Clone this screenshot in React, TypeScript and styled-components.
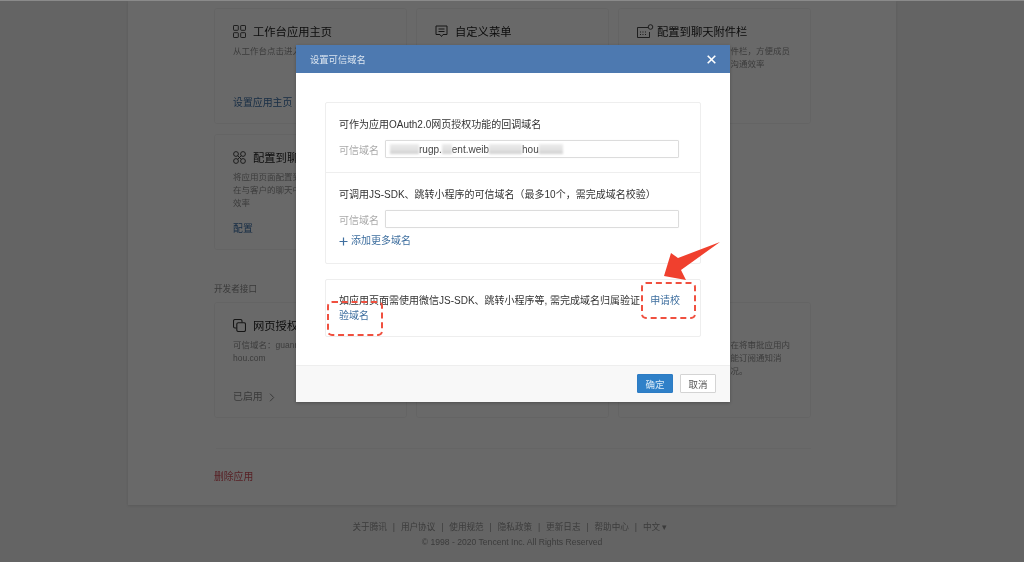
import React from "react";
import styled, { createGlobalStyle } from "styled-components";

const Global = createGlobalStyle`
  html, body { margin: 0; padding: 0; height: 562px; overflow: hidden; background: #efefef; }
  * { box-sizing: border-box; }
  body { font-family: "Liberation Sans", "Noto Sans CJK SC", sans-serif; }
`;

const Page = styled.div`
  position: relative;
  width: 1024px;
  height: 562px;
  overflow: hidden;
  display: flex;
  flex-direction: column;
  align-items: center;
  background: #efefef;
  border-top: 1px solid #8a8a8a;
  filter: blur(0.45px);
`;
const Panel = styled.main`
  width: 768px;
  height: 504px;
  flex: none;
  padding: 7px 85px 0 86px;
  background: #fbfbfb;
  box-shadow: 0 1px 3px rgba(0, 0, 0, 0.12);
`;
const CardGrid = styled.section`
  display: grid;
  grid-template-columns: repeat(3, 193px);
  grid-auto-rows: 116px;
  column-gap: 9px;
  row-gap: 10px;
`;
const Card = styled.article`
  display: flex;
  flex-direction: column;
  padding: 14px 10px 13px 18px;
  border: 1px solid #efefef;
  border-radius: 3px;
`;
const CardHead = styled.header<{ $tight?: boolean }>`
  display: flex;
  align-items: center;
  gap: ${(p) => (p.$tight ? "3px" : "7px")};
  height: 16px;
  font-size: 11.3px;
  color: #222;
  white-space: nowrap;
  svg { flex: none; color: #333; }
`;
const CardDesc = styled.p`
  margin: 6px 0 0;
  font-size: 8.5px;
  line-height: 13px;
  color: #8f8f8f;
  white-space: nowrap;
`;
const CardLink = styled.a<{ $muted?: boolean }>`
  display: flex;
  align-items: center;
  gap: 6px;
  margin-top: auto;
  font-size: 9.9px;
  line-height: 14px;
  color: ${(p) => (p.$muted ? "#888" : "#3a6ea5")};
`;
const SectionLabel = styled.h2`
  margin: 32px 0 6px;
  font-size: 8.6px;
  line-height: 14px;
  font-weight: 400;
  color: #888;
`;
const Divider = styled.hr`
  margin: 30px 0 21px 2px;
  border: 0;
  border-top: 1px solid #f0f0f0;
`;
const DangerLink = styled.a`
  display: block;
  font-size: 9.8px;
  line-height: 14px;
  color: #d0505a;
`;
const Footer = styled.footer`
  display: flex;
  flex-direction: column;
  align-items: center;
  gap: 3px;
  margin-top: 16px;
  font-size: 8.6px;
  line-height: 12px;
  color: #8e8e8e;
`;
const FooterLinks = styled.nav`
  display: flex;
  gap: 5.9px;
  margin-right: 4px;
  white-space: nowrap;
`;

const Overlay = styled.div`
  position: absolute;
  inset: 0;
  display: flex;
  justify-content: center;
  align-items: flex-start;
  padding: 44px 0 0 2px;
  background: rgba(0, 0, 0, 0.58);
`;
const Modal = styled.div`
  width: 434px;
  height: 357px;
  display: flex;
  flex-direction: column;
  background: #fff;
  box-shadow: 0 1px 3px rgba(0, 0, 0, 0.25);
`;
const ModalHead = styled.header`
  flex: none;
  height: 28px;
  display: flex;
  align-items: center;
  justify-content: space-between;
  padding: 0 14px;
  background: #4d79b0;
  color: #dbe5f0;
  font-size: 9.3px;
  svg { color: #fff; }
`;
const ModalBody = styled.div`
  flex: 1;
  display: flex;
  flex-direction: column;
  gap: 15px;
  padding: 29px 29px 0;
`;
const Section = styled.section`
  position: relative;
  border: 1px solid #eeeeee;
  border-radius: 2px;
`;
const Block = styled.div<{ $last?: boolean }>`
  height: ${(p) => (p.$last ? "90px" : "70px")};
  padding: 15px 21px 0 13px;
  border-bottom: ${(p) => (p.$last ? "0" : "1px solid #eeeeee")};
`;
const BlockTitle = styled.h3`
  margin: 0;
  font-size: 10px;
  line-height: 14px;
  font-weight: 400;
  color: #333;
  white-space: nowrap;
`;
const Field = styled.div`
  display: flex;
  align-items: center;
  gap: 6px;
  margin-top: 8px;
`;
const FieldLabel = styled.label`
  flex: none;
  width: 40px;
  font-size: 10px;
  color: #aaa;
`;
const FakeInput = styled.div`
  flex: 1;
  height: 18px;
  display: flex;
  align-items: center;
  padding-left: 4px;
  border: 1px solid #dcdcdc;
  border-radius: 1px;
  box-shadow: 0 0 1px rgba(0, 0, 0, 0.08);
  font-size: 10px;
  color: #444;
  white-space: nowrap;
`;
const Redacted = styled.span<{ $w: number }>`
  display: inline-block;
  flex: none;
  width: ${(p) => p.$w}px;
  height: 10px;
  background: linear-gradient(180deg, #ececec 0%, #e2e2e2 55%, #cfcfcf 100%);
  filter: blur(0.8px);
`;
const AddMore = styled.a`
  display: flex;
  align-items: center;
  gap: 3px;
  margin-top: 6px;
  font-size: 10px;
  line-height: 14px;
  color: #3f6f9f;
`;
const Notice = styled.p`
  margin: 0;
  padding: 13px;
  font-size: 10px;
  line-height: 15px;
  color: #333;
`;
const NoticeLink = styled.a`
  margin-left: 10px;
  color: #3f6f9f;
`;
const DashedBox = styled.span<{ $left: number; $top: number; $w: number; $h: number }>`
  position: absolute;
  left: ${(p) => p.$left}px;
  top: ${(p) => p.$top}px;
  width: ${(p) => p.$w}px;
  height: ${(p) => p.$h}px;
  border: 2px dashed #f0503f;
  border-radius: 5px;
`;
const Arrow = styled.svg`
  position: absolute;
  left: 0;
  top: 0;
  pointer-events: none;
`;
const ModalFoot = styled.footer`
  flex: none;
  height: 37px;
  display: flex;
  align-items: center;
  justify-content: flex-end;
  gap: 7px;
  padding: 0 14px 1px 0;
  background: #f8f8f8;
  border-top: 1px solid #eeeeee;
`;
const Button = styled.button<{ $primary?: boolean }>`
  width: 36px;
  height: 19px;
  padding: 0;
  border: 1px solid ${(p) => (p.$primary ? "#2d7cc4" : "#d4d4d4")};
  border-radius: 1px;
  background: ${(p) => (p.$primary ? "#2f80c8" : "#fff")};
  color: ${(p) => (p.$primary ? "#dcebf7" : "#555")};
  font: 9.5px "Liberation Sans", "Noto Sans CJK SC", sans-serif;
`;

const GridIcon = () => (
  <svg width="13" height="13" viewBox="0 0 13 13" fill="none" stroke="currentColor" strokeWidth="0.9">
    <rect x="0.5" y="0.5" width="4.8" height="4.8" rx="0.6" />
    <rect x="7.7" y="0.5" width="4.8" height="4.8" rx="0.6" />
    <rect x="0.5" y="7.7" width="4.8" height="4.8" rx="0.6" />
    <rect x="7.7" y="7.7" width="4.8" height="4.8" rx="0.6" />
  </svg>
);
const MenuIcon = () => (
  <svg width="13" height="13" viewBox="0 0 13 13" fill="none" stroke="currentColor" strokeWidth="1">
    <path d="M1 1h11v8.500H8L6.500 11.500 5 9.500H1z" />
    <path d="M3.500 4h6M3.500 6.500h6" />
  </svg>
);
const AttachIcon = () => (
  <svg width="17" height="14" viewBox="0 0 17 14" fill="none" stroke="currentColor" strokeWidth="0.9">
    <path d="M11 3.500H.5v10h12V8" />
    <path d="M3 8h.9M5.500 8h.9M8 8h.9M3 10.500h.9M5.500 10.500h.9M8 10.500h.9" strokeWidth="1.200" />
    <circle cx="13.500" cy="3" r="2.300" />
  </svg>
);
const LeafIcon = () => (
  <svg width="13" height="13" viewBox="0 0 13 13" fill="none" stroke="currentColor" strokeWidth="0.9">
    <circle cx="3" cy="3" r="2.400" />
    <circle cx="10" cy="3" r="2.400" />
    <circle cx="3" cy="10" r="2.400" />
    <circle cx="10" cy="10" r="2.400" />
    <path d="M4.700 4.700l3.600 3.600M8.300 4.700L4.700 8.300" />
  </svg>
);
const LayersIcon = () => (
  <svg width="13" height="13" viewBox="0 0 13 13" fill="none" stroke="currentColor" strokeWidth="1.100">
    <path d="M3.500 9H2a1.500 1.500 0 0 1-1.500-1.500V2A1.500 1.500 0 0 1 2 .5h5.500A1.500 1.500 0 0 1 9 2v1.500" />
    <rect x="3.800" y="3.800" width="8.700" height="8.700" rx="1.500" />
  </svg>
);
const ChevronIcon = () => (
  <svg width="6" height="9" viewBox="0 0 6 9" fill="none" stroke="currentColor" strokeWidth="1">
    <path d="M1 .7l3.700 3.800L1 8.300" />
  </svg>
);
const CloseIcon = () => (
  <svg width="9" height="9" viewBox="0 0 9 9" fill="none" stroke="currentColor" strokeWidth="1.600">
    <path d="M.7.7l7.600 7.600M8.300.7L.7 8.300" />
  </svg>
);
const PlusIcon = () => (
  <svg width="9" height="9" viewBox="0 0 9 9" fill="none" stroke="currentColor" strokeWidth="1.200">
    <path d="M4.500.5v8M.5 4.500h8" />
  </svg>
);

const footerLinks = ["关于腾讯", "|", "用户协议", "|", "使用规范", "|", "隐私政策", "|", "更新日志", "|", "帮助中心", "|", "中文 ▾"];

export default function App() {
  return (
    <>
      <Global />
      <Page>
        <Panel>
          <CardGrid>
            <Card>
              <CardHead><GridIcon />工作台应用主页</CardHead>
              <CardDesc>从工作台点击进入应用时显示的页面</CardDesc>
              <CardLink>设置应用主页</CardLink>
            </Card>
            <Card>
              <CardHead><MenuIcon />自定义菜单</CardHead>
            </Card>
            <Card>
              <CardHead $tight><AttachIcon />配置到聊天附件栏</CardHead>
              <CardDesc>将应用页面配置到聊天附件栏，方便成员<br />在聊天时快速访问，提高沟通效率</CardDesc>
            </Card>
            <Card>
              <CardHead><LeafIcon />配置到聊天工具栏</CardHead>
              <CardDesc>将应用页面配置到聊天工具栏，方便成员<br />在与客户的聊天中快速访问，提高沟通<br />效率</CardDesc>
              <CardLink>配置</CardLink>
            </Card>
            <Card />
          </CardGrid>
          <SectionLabel>开发者接口</SectionLabel>
          <CardGrid>
            <Card>
              <CardHead><LayersIcon />网页授权及</CardHead>
              <CardDesc>可信域名：guanrugp.ent.weib<br />hou.com</CardDesc>
              <CardLink $muted>已启用 <ChevronIcon /></CardLink>
            </Card>
            <Card />
            <Card>
              <CardHead />
              <CardDesc>企业可使用接口或组件，在将审批应用内<br />容发送给相关成员，同时能订阅通知消<br />息及与审批进度的最新状况。</CardDesc>
            </Card>
          </CardGrid>
          <Divider />
          <DangerLink>删除应用</DangerLink>
        </Panel>
        <Footer>
          <FooterLinks>
            {footerLinks.map((item, i) => (
              <span key={i}>{item}</span>
            ))}
          </FooterLinks>
          <span>© 1998 - 2020 Tencent Inc. All Rights Reserved</span>
        </Footer>

        <Overlay>
          <Modal>
            <ModalHead>
              设置可信域名
              <CloseIcon />
            </ModalHead>
            <ModalBody>
              <Section>
                <Block>
                  <BlockTitle>可作为应用OAuth2.0网页授权功能的回调域名</BlockTitle>
                  <Field>
                    <FieldLabel>可信域名</FieldLabel>
                    <FakeInput>
                      <Redacted $w={29} />rugp.<Redacted $w={10} />ent.weib<Redacted $w={33} />hou<Redacted $w={24} />
                    </FakeInput>
                  </Field>
                </Block>
                <Block $last>
                  <BlockTitle>可调用JS-SDK、跳转小程序的可信域名（最多10个，需完成域名校验）</BlockTitle>
                  <Field>
                    <FieldLabel>可信域名</FieldLabel>
                    <FakeInput />
                  </Field>
                  <AddMore><PlusIcon />添加更多域名</AddMore>
                </Block>
              </Section>
              <Section>
                <Notice>
                  如应用页面需使用微信JS-SDK、跳转小程序等, 需完成域名归属验证
                  <NoticeLink>申请校验域名</NoticeLink>
                </Notice>
                <DashedBox $left={315} $top={2} $w={55} $h={37} />
                <DashedBox $left={1} $top={21} $w={56} $h={35} />
              </Section>
            </ModalBody>
            <ModalFoot>
              <Button $primary>确定</Button>
              <Button>取消</Button>
            </ModalFoot>
          </Modal>
          <Arrow width="1024" height="562" viewBox="0 0 1024 562">
            <path d="M720 241L678 257 671 252 664 275 686 279 681 269z" fill="#f0402e" />
          </Arrow>
        </Overlay>
      </Page>
    </>
  );
}
